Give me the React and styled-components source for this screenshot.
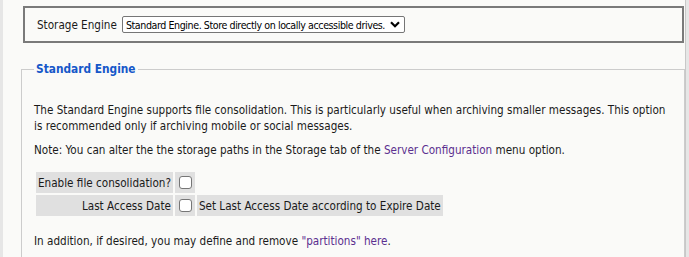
import React from "react";
import styled, { createGlobalStyle } from "styled-components";

const GlobalStyle = createGlobalStyle`
  html, body {
    margin: 0;
    padding: 0;
    background: #e6e6e6;
    overflow: hidden;
  }
  body {
    font-family: "DejaVu Sans Condensed", "DejaVu Sans", sans-serif;
    font-size: 11.6px;
    color: #1a1a1a;
  }
`;

export default function App() {
  return (
    <>
      <GlobalStyle />
      <Page>
        <EngineBox>
          <EngineLabel>Storage Engine</EngineLabel>
          <SelectWrap>
            <Select defaultValue="standard">
              <option value="standard">
                Standard Engine. Store directly on locally accessible drives.
              </option>
            </Select>
            <Chevron viewBox="0 0 10 7">
              <path d="M1 1.2 L5 5.2 L9 1.2" />
            </Chevron>
          </SelectWrap>
        </EngineBox>

        <Section>
          <Legend>Standard Engine</Legend>
          <Para $gap={16}>
            The Standard Engine supports file consolidation. This is
            particularly useful when archiving smaller messages. This option
            is recommended only if archiving mobile or social messages.
          </Para>
          <Para $gap={8}>
            Note: You can alter the the storage paths in the Storage tab of the{" "}
            <Link href="#">Server Configuration</Link> menu option.
          </Para>
          <Options>
            <tbody>
              <tr>
                <LabelCell>Enable file consolidation?</LabelCell>
                <BoxCell>
                  <Check type="checkbox" />
                </BoxCell>
              </tr>
              <tr>
                <LabelCell>Last Access Date</LabelCell>
                <BoxCell>
                  <Check type="checkbox" />
                </BoxCell>
                <TextCell>Set Last Access Date according to Expire Date</TextCell>
              </tr>
            </tbody>
          </Options>
          <Para $gap={15}>
            In addition, if desired, you may define and remove{" "}
            <Link href="#">"partitions" here</Link>.
          </Para>
        </Section>
      </Page>
    </>
  );
}

const Page = styled.div`
  margin: 0 3px 0 3px;
  width: 683px;
  height: 257px;
  box-sizing: border-box;
  background: #fafaf8;
  padding: 6px 0 0 0;
  border-right: 1px solid #c8c8c8;
  overflow: hidden;
`;

const EngineBox = styled.div`
  margin: 0 1px 0 20px;
  height: 37px;
  box-sizing: border-box;
  border: 2px solid #7a7a7a;
  display: flex;
  align-items: center;
  padding: 0 12px;
  gap: 5px;
`;

const EngineLabel = styled.span`
  font-size: 11.6px;
`;

const SelectWrap = styled.div`
  position: relative;
  display: flex;
`;

const Select = styled.select`
  appearance: none;
  font-family: "DejaVu Sans Condensed", "DejaVu Sans", sans-serif;
  font-size: 10.6px;
  letter-spacing: -0.42px;
  color: #000;
  background: #fff;
  border: 1px solid #767676;
  border-radius: 2px;
  height: 17px;
  width: 283px;
  padding: 0 16px 0 3px;
  margin: 0;
`;

const Chevron = styled.svg`
  position: absolute;
  right: 5px;
  top: 5px;
  width: 10px;
  height: 7px;
  fill: none;
  stroke: #000;
  stroke-width: 2.2;
  pointer-events: none;
`;

const Section = styled.fieldset`
  margin: 19px 0 0 18px;
  padding: 10px 12px 20px 12px;
  border: 1px solid #cccccc;
  min-width: 0;
`;

const Legend = styled.legend`
  padding: 0 2px;
  font-weight: bold;
  font-size: 11.8px;
  color: #1557c9;
`;

const Para = styled.p`
  margin: ${(p) => p.$gap}px 0 0 0;
  line-height: 16px;
`;

const Link = styled.a`
  color: #5b2f8f;
  text-decoration: none;
`;

const Options = styled.table`
  margin: 12px 0 0 0;
  border-spacing: 2px;
  font-size: 11.6px;
`;

const Cell = styled.td`
  background: #e0e0e0;
  height: 21px;
  padding: 0 2px;
  box-sizing: border-box;
  white-space: nowrap;
`;

const LabelCell = styled(Cell)`
  text-align: right;
`;

const BoxCell = styled(Cell)`
  padding: 0 3px 0 4px;
`;

const TextCell = styled(Cell)``;

const Check = styled.input`
  appearance: none;
  display: block;
  width: 13px;
  height: 13px;
  margin: 0;
  background: #fff;
  border: 1px solid #767676;
  border-radius: 3px;
  box-sizing: border-box;
`;
